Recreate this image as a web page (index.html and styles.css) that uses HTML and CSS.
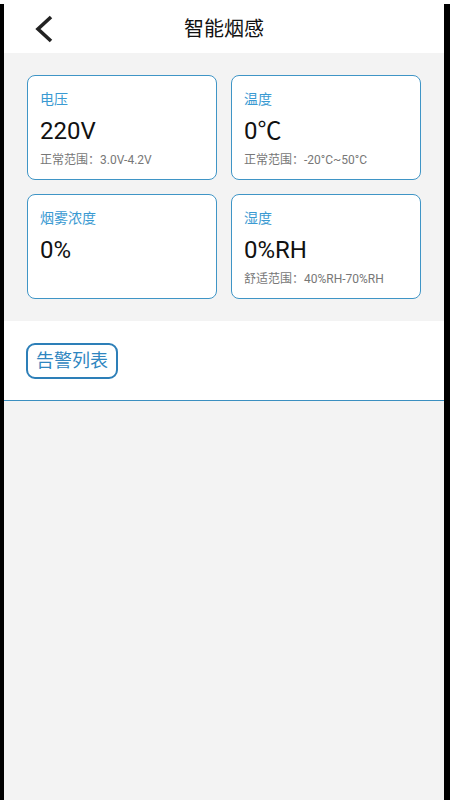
FILE: index.html
```html
<!DOCTYPE html>
<html lang="zh-CN">
<head>
<meta charset="utf-8">
<title>智能烟感</title>
<link rel="stylesheet" href="styles.css">
</head>
<body>
<div class="frame">
  <header class="header">
    <svg class="back" width="24" height="30" viewBox="0 0 24 30">
      <polyline points="17,3 4,15 17,27" fill="none" stroke="#222" stroke-width="3.6" stroke-linecap="butt" stroke-linejoin="miter"/>
    </svg>
    <h1 class="title">智能烟感</h1>
  </header>
  <section class="panel">
    <div class="card">
      <div class="label">电压</div>
      <div class="value">220V</div>
      <div class="hint">正常范围：3.0V-4.2V</div>
    </div>
    <div class="card">
      <div class="label">温度</div>
      <div class="value">0℃</div>
      <div class="hint">正常范围：-20°C~50°C</div>
    </div>
    <div class="card">
      <div class="label">烟雾浓度</div>
      <div class="value">0%</div>
    </div>
    <div class="card">
      <div class="label">湿度</div>
      <div class="value">0%RH</div>
      <div class="hint">舒适范围：40%RH-70%RH</div>
    </div>
  </section>
  <section class="actions">
    <button class="alarm-btn">告警列表</button>
  </section>
  <div class="rest"></div>
</div>
</body>
</html>
```
FILE: styles.css
```css
* { box-sizing: border-box; }
html, body { margin: 0; padding: 0; }
body {
  background: #fff;
  font-family: Roboto, "Noto Sans CJK SC", sans-serif;
  width: 450px;
  height: 800px;
  overflow: hidden;
}
.frame {
  margin-top: 4px;
  height: 796px;
  border-left: 4px solid #000;
  border-right: 6px solid #000;
  display: flex;
  flex-direction: column;
  background: #f3f3f3;
}
.header {
  position: relative;
  height: 49px;
  background: #fff;
  display: flex;
  align-items: center;
  justify-content: center;
  flex-shrink: 0;
}
.back {
  position: absolute;
  left: 30px;
  top: 10px;
}
.title {
  margin: 0;
  font-size: 20px;
  font-weight: normal;
  color: #111;
  line-height: 26px;
}
.panel {
  background: #f3f3f3;
  padding: 22px 23px 22px 23px;
  display: grid;
  grid-template-columns: 1fr 1fr;
  grid-auto-rows: 105px;
  gap: 14px;
}
.card {
  background: #fff;
  border: 1px solid #3f95c6;
  border-radius: 8px;
  padding: 13px 12px 0 12px;
}
.label {
  font-size: 14px;
  line-height: 20px;
  color: #3a9ad2;
}
.value {
  margin-top: 7px;
  font-size: 24px;
  line-height: 30px;
  color: #111;
}
.hint {
  margin-top: 6px;
  font-size: 12px;
  line-height: 16px;
  color: #777;
}
.actions {
  background: #fff;
  padding: 22px 22px 21px;
  border-bottom: 1px solid #3a8fc0;
  display: flex;
}
.alarm-btn {
  font-family: Roboto, "Noto Sans CJK SC", sans-serif;
  font-size: 18px;
  line-height: 24px;
  color: #2f86c0;
  background: #fff;
  border: 2px solid #2d7fb8;
  border-radius: 9px;
  padding: 4px 8px;
  white-space: nowrap;
  height: 36px;
}
.rest {
  flex: 1;
  background: #f3f3f3;
}
```
